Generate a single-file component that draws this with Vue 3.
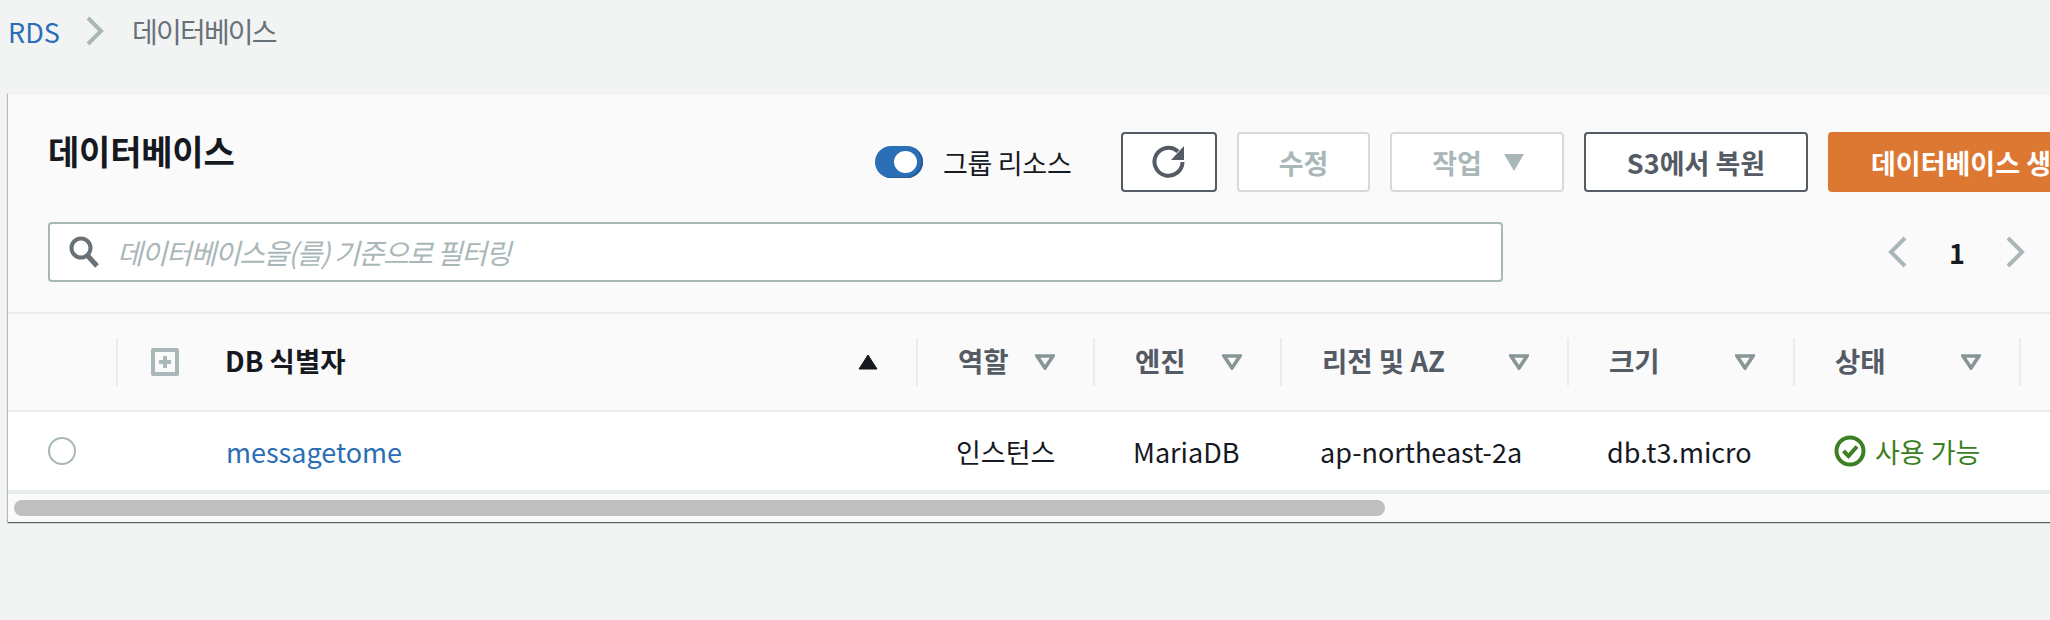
<script setup>
const columns = [
  { label: '역할', value: '인스턴스' },
  { label: '엔진', value: 'MariaDB' },
  { label: '리전 및 AZ', value: 'ap-northeast-2a' },
  { label: '크기', value: 'db.t3.micro' }
]
</script>

<template>
  <div class="page">
    <nav class="crumbs">
      <a class="crumb_link">RDS</a>
      <svg class="crumb_sep" width="20" height="30" viewBox="0 0 20 30">
        <path d="M3 2 L16 15 L3 28" fill="none" stroke="#aab7b8" stroke-width="4" />
      </svg>
      <span class="crumb_now">데이터베이스</span>
    </nav>

    <section class="card">
      <div class="head">
        <div class="toolbar">
          <h1 class="title">데이터베이스</h1>
          <span class="toggle"><span class="knob"></span></span>
          <span class="toggle_label">그룹 리소스</span>
          <button class="btn btn_icon">
            <svg width="36" height="34" viewBox="0 0 36 34">
              <path d="M27 6.5 A14 14 0 1 0 31.5 17" fill="none" stroke="#545b64" stroke-width="4" />
              <path d="M33 1 V15 H20 Z" fill="#545b64" />
            </svg>
          </button>
          <button class="btn btn_off btn_edit">수정</button>
          <button class="btn btn_off btn_action">
            작업
            <svg width="20" height="17" viewBox="0 0 20 17"><path d="M0 0 H20 L10 17 Z" fill="#aab7b8" /></svg>
          </button>
          <button class="btn btn_restore">S3에서 복원</button>
          <button class="btn btn_primary">데이터베이스 생성</button>
        </div>
        <div class="filter_row">
          <div class="search">
            <svg width="30" height="32" viewBox="0 0 30 32">
              <circle cx="12" cy="12" r="9.5" fill="none" stroke="#687078" stroke-width="4" />
              <path d="M18 19 L28 30" stroke="#687078" stroke-width="5" />
            </svg>
            <span class="placeholder">데이터베이스을(를) 기준으로 필터링</span>
          </div>
          <div class="pager">
            <svg width="20" height="32" viewBox="0 0 20 32"><path d="M17 2 L3 16 L17 30" fill="none" stroke="#aab7b8" stroke-width="4" /></svg>
            <span class="page_no">1</span>
            <svg width="20" height="32" viewBox="0 0 20 32"><path d="M3 2 L17 16 L3 30" fill="none" stroke="#aab7b8" stroke-width="4" /></svg>
          </div>
        </div>
      </div>

      <div class="grid grid_head">
        <div class="th th_first"></div>
        <div class="th th_name">
          <span class="plus"><span class="plus_inner"></span></span>
          <span class="th_label name_label">DB 식별자</span>
          <svg class="sort_up" width="20" height="16" viewBox="0 0 20 16"><path d="M10 1 L19 15 H1 Z" fill="#16191f" stroke="#16191f" stroke-linejoin="round" /></svg>
        </div>
        <div v-for="col in columns" :key="col.label" class="th">
          <span class="th_label">{{ col.label }}</span>
          <svg width="20" height="16" viewBox="0 0 20 16"><path d="M2 2 H18 L10 14 Z" fill="none" stroke="#879596" stroke-width="3.5" /></svg>
        </div>
        <div class="th">
          <span class="th_label">상태</span>
          <svg width="20" height="16" viewBox="0 0 20 16"><path d="M2 2 H18 L10 14 Z" fill="none" stroke="#879596" stroke-width="3.5" /></svg>
        </div>
      </div>

      <div class="grid grid_row">
        <div class="td td_radio"><span class="radio"></span></div>
        <div class="td td_name"><a class="db_link">messagetome</a></div>
        <div v-for="col in columns" :key="col.value" class="td">{{ col.value }}</div>
        <div class="td td_status">
          <svg width="32" height="32" viewBox="0 0 32 32">
            <circle cx="16" cy="16" r="13.5" fill="none" stroke="#3b8022" stroke-width="4" />
            <path d="M9.5 16 L14.5 21 L23 11.5" fill="none" stroke="#3b8022" stroke-width="4" />
          </svg>
          <span>사용 가능</span>
        </div>
      </div>

      <div class="track"><div class="thumb"></div></div>
    </section>
  </div>
</template>

<style>
html, body {
  margin: 0;
  background: #f2f3f3;
}
</style>

<style scoped>
.page {
  width: 2050px;
  height: 620px;
  overflow: hidden;
  background: #f2f3f3;
  font-family: "Noto Sans CJK KR", "Noto Sans", sans-serif;
  color: #16191f;
}

.crumbs {
  height: 62px;
  margin-bottom: 32px;
  padding-left: 8px;
  display: flex;
  align-items: center;
  font-size: 27px;
}

.crumb_link {
  color: #2a6eb5;
  width: 77px;
}

.crumb_sep {
  margin-right: 27px;
}

.crumb_now {
  color: #687078;
  font-size: 28px;
  letter-spacing: -1.8px;
}

.card {
  width: 2300px;
  margin-left: 8px;
  background: #fafafa;
  box-shadow: 0 1px 1px 0 rgba(0, 28, 36, 0.5), 1px 1px 1px 0 rgba(0, 28, 36, 0.15), -1px 1px 1px 0 rgba(0, 28, 36, 0.2);
  border-top: 1px solid #eaeded;
  margin-top: -1px;
}

.head {
  padding: 38px 0 30px 40px;
  border-bottom: 2px solid #eaeded;
}

.toolbar {
  display: flex;
  align-items: center;
  height: 60px;
}

.title {
  width: 827px;
  margin: -22px 0 0;
  font-size: 34px;
  font-weight: 700;
  line-height: 40px;
  letter-spacing: -0.2px;
}

.toggle {
  width: 48px;
  height: 32px;
  border-radius: 16px;
  background: #2a6eb5;
  box-shadow: inset -2px -1px 0 #235c96;
  position: relative;
  flex: none;
}

.knob {
  position: absolute;
  right: 6px;
  top: 5px;
  width: 23px;
  height: 22px;
  border-radius: 50%;
  background: #fff;
}

.toggle_label {
  width: 178px;
  margin-left: 20px;
  font-size: 27px;
  letter-spacing: -0.3px;
  white-space: nowrap;
}

.btn {
  height: 60px;
  box-sizing: border-box;
  border: 2px solid #545b64;
  border-radius: 4px;
  background: #fff;
  font-family: inherit;
  font-size: 27px;
  font-weight: 700;
  color: #545b64;
  display: flex;
  align-items: center;
  justify-content: center;
  padding: 0;
  flex: none;
}

.btn_icon {
  width: 96px;
  margin-right: 20px;
}

.btn_off {
  border-color: #d5dbdb;
  color: #aab7b8;
}

.btn_edit {
  width: 133px;
  margin-right: 20px;
}

.btn_action {
  width: 174px;
  margin-right: 20px;
  gap: 22px;
  padding-left: 2px;
}

.btn_restore {
  width: 224px;
  margin-right: 20px;
}

.btn_primary {
  width: 300px;
  border: none;
  background: #dd7832;
  color: #fff;
  justify-content: flex-start;
  padding-left: 43px;
  white-space: nowrap;
}

.filter_row {
  display: flex;
  align-items: center;
  margin-top: 30px;
}

.search {
  width: 1455px;
  height: 60px;
  box-sizing: border-box;
  border: 2px solid #aab7b8;
  border-radius: 4px;
  background: #fff;
  display: flex;
  align-items: center;
  padding-left: 19px;
  gap: 18px;
}

.placeholder {
  font-size: 28px;
  font-style: italic;
  color: #aab7b8;
  letter-spacing: -1.3px;
}

.pager {
  display: flex;
  align-items: center;
  margin-left: 385px;
}

.page_no {
  margin: 0 40px 0 41px;
  font-size: 27px;
  font-weight: 700;
}

.grid {
  display: grid;
  grid-template-columns: 110px 800px 177px 187px 287px 226px 226px;
}

.grid_head {
  height: 96px;
  align-items: center;
  border-bottom: 2px solid #eaeded;
}

.th {
  height: 48px;
  box-sizing: border-box;
  border-right: 2px solid #eaeded;
  padding: 0 38px 0 40px;
  display: flex;
  align-items: center;
  justify-content: space-between;
  font-size: 27.5px;
  font-weight: 700;
  color: #545b64;
  white-space: nowrap;
}

.th_label {
  position: relative;
  top: -2px;
}

.th_name {
  padding: 0 38px 0 33px;
  justify-content: flex-start;
  color: #16191f;
}

.name_label {
  margin-left: 46px;
}

.sort_up {
  margin-left: auto;
}

.plus {
  width: 28px;
  height: 28px;
  box-sizing: border-box;
  border: 4px solid #aab7b8;
  border-radius: 2px;
  background: #fafafa;
  display: flex;
  align-items: center;
  justify-content: center;
  flex: none;
}

.plus_inner {
  width: 12px;
  height: 12px;
  background:
    linear-gradient(#aab7b8, #aab7b8) center / 12px 4px no-repeat,
    linear-gradient(#aab7b8, #aab7b8) center / 4px 12px no-repeat;
}

.grid_row {
  height: 78px;
  align-items: center;
  background: #fff;
  border-bottom: 4px solid #eaeded;
  font-size: 27px;
}

.td {
  padding-left: 38px;
  white-space: nowrap;
}

.td_radio {
  display: flex;
  padding-left: 40px;
}

.radio {
  width: 28px;
  height: 28px;
  box-sizing: border-box;
  border: 2px solid #aab7b8;
  border-radius: 50%;
  background: #fff;
}

.td_name {
  padding-left: 108px;
}

.db_link {
  color: #2a6eb5;
  font-size: 27px;
}

.td_status {
  display: flex;
  align-items: center;
  gap: 9px;
  padding-left: 39px;
  color: #3b8022;
}

.track {
  height: 28px;
  box-sizing: border-box;
  padding: 6px 6px;
  background: #fafafa;
}

.thumb {
  width: 1371px;
  height: 16px;
  border-radius: 8px;
  background: #bfbfbf;
}
</style>
